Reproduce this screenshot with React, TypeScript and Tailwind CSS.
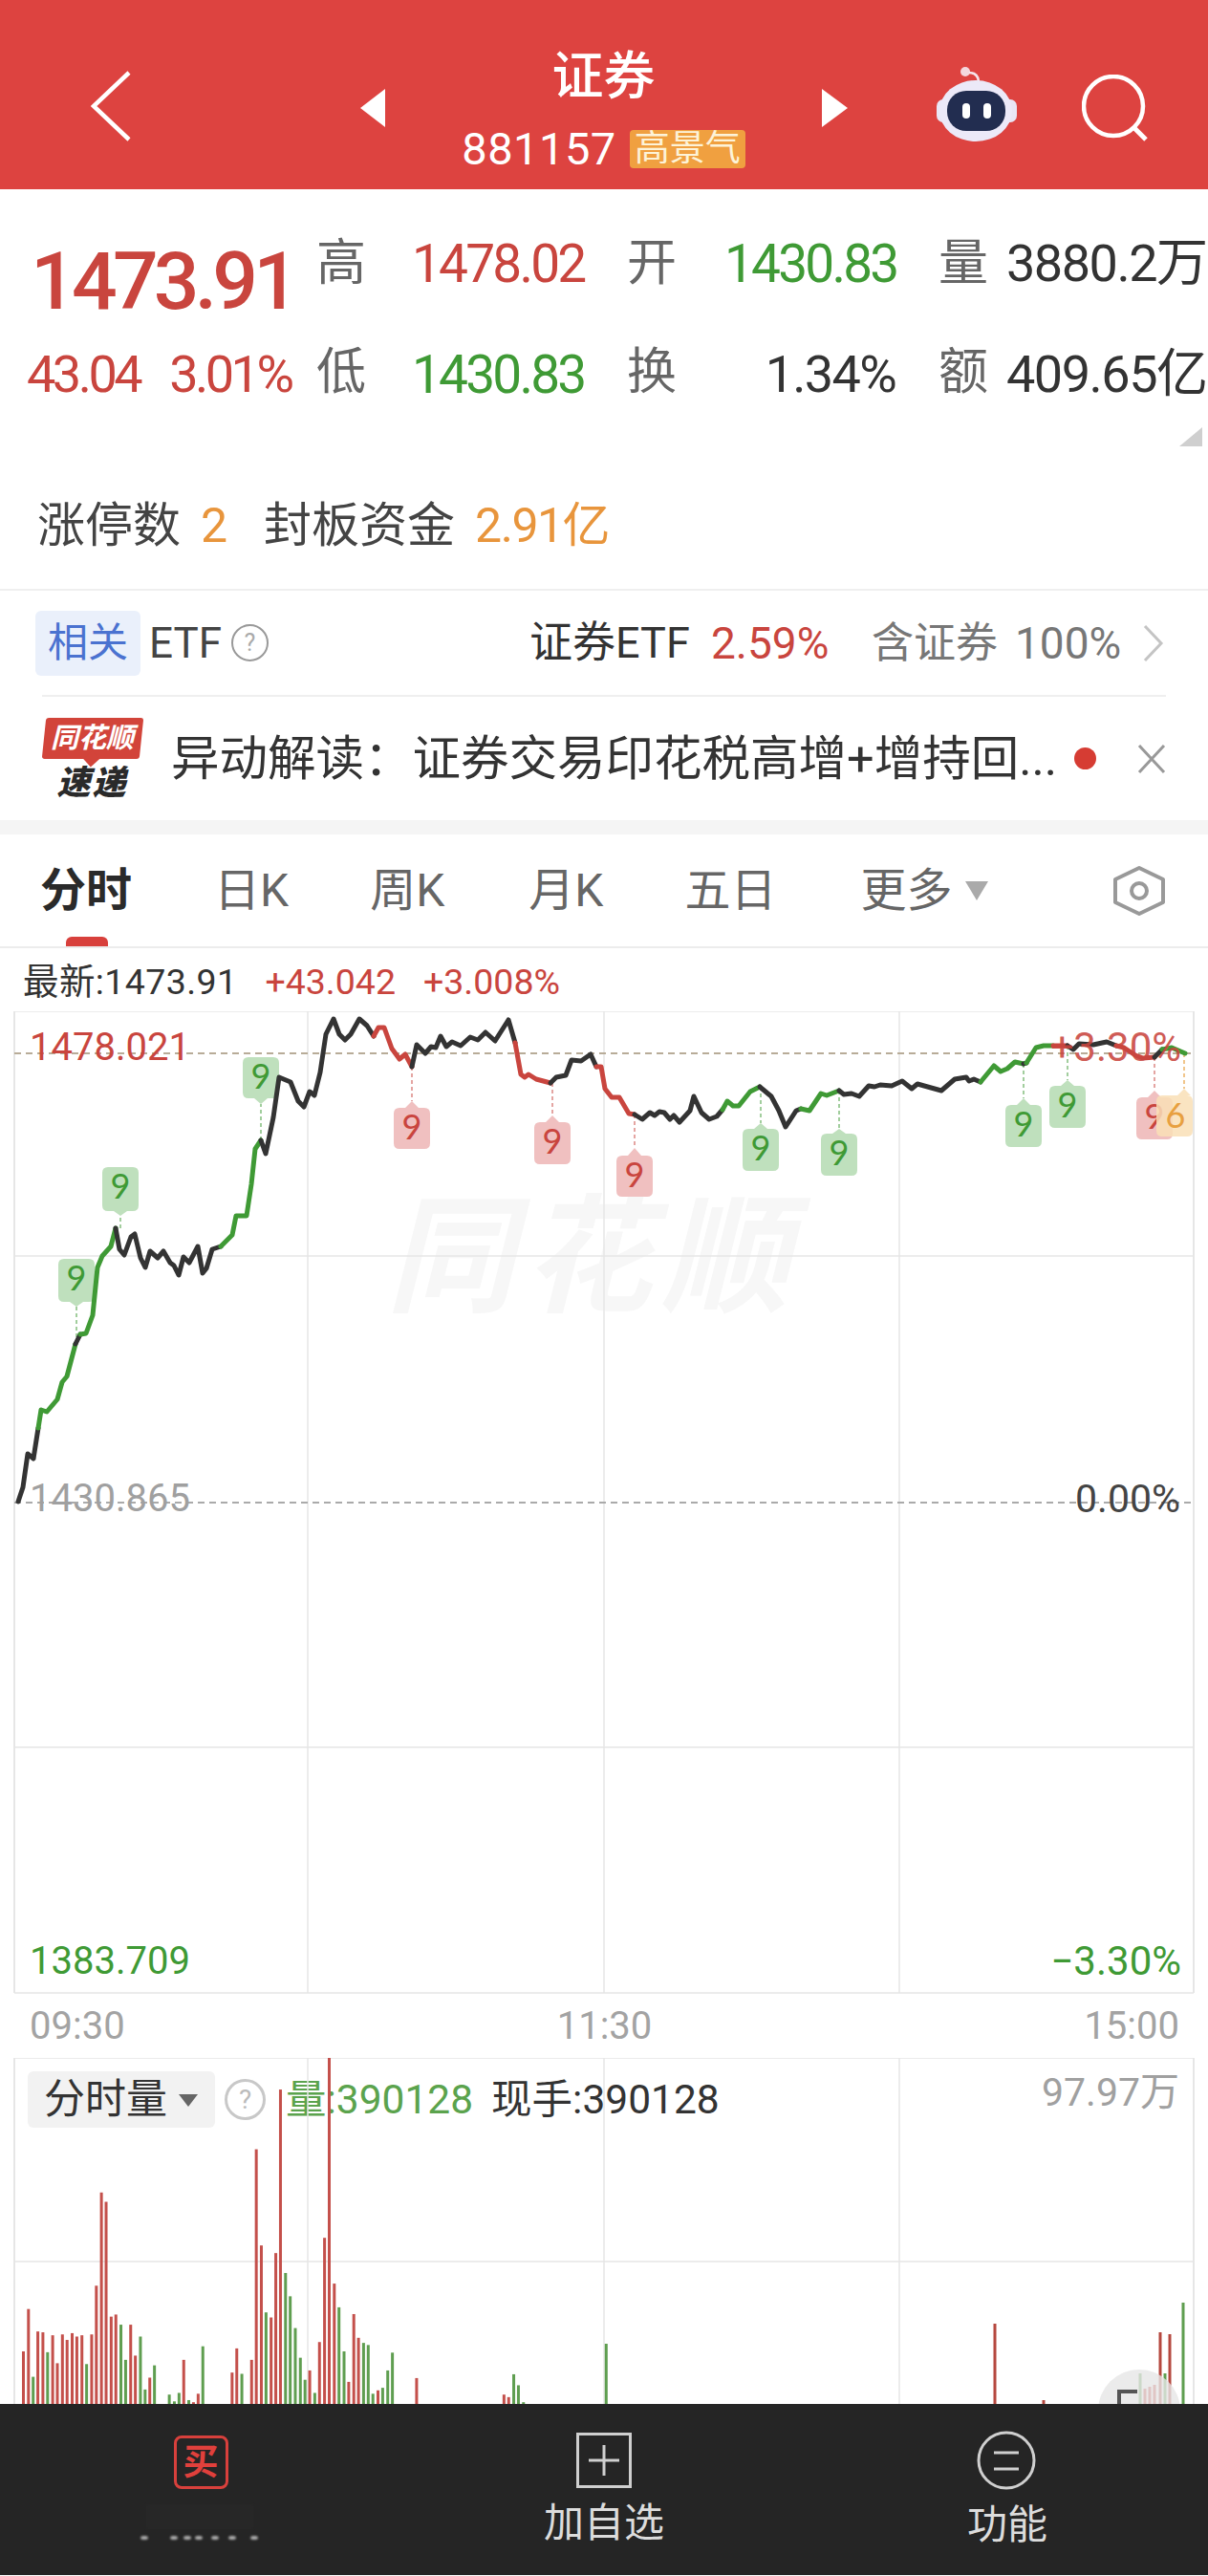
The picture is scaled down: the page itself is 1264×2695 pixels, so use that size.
type Seg = { color: string; pts: number[][] };

const GREEN = "#3f9a35";
const RED = "#c9453e";
const BLACK = "#333333";

const segments: Seg[] = [
  { color: BLACK, pts: [[19, 1572], [24, 1557], [29, 1522], [35, 1527], [40, 1495]] },
  { color: GREEN, pts: [[40, 1495], [43, 1476], [49, 1478], [60, 1465], [65, 1447], [70, 1441], [79, 1407]] },
  { color: BLACK, pts: [[79, 1407], [84, 1397]] },
  { color: GREEN, pts: [[84, 1397], [90, 1396], [97, 1377], [102, 1327], [107, 1315], [116, 1305], [121, 1286]] },
  {
    color: BLACK,
    pts: [[121, 1286], [125, 1308], [130, 1314], [137, 1295], [141, 1292], [147, 1317], [152, 1327], [157, 1310], [165, 1317], [171, 1310], [178, 1322], [182, 1325], [187, 1335], [192, 1316], [198, 1322], [207, 1305], [212, 1333], [216, 1328], [222, 1308], [231, 1305]],
  },
  { color: GREEN, pts: [[231, 1305], [243, 1293], [247, 1273], [258, 1273], [263, 1240], [267, 1203], [273, 1194]] },
  {
    color: BLACK,
    pts: [[273, 1194], [278, 1208], [286, 1170], [292, 1128], [304, 1133], [312, 1153], [318, 1159], [324, 1143], [329, 1147], [335, 1123], [341, 1083], [349, 1067], [355, 1083], [361, 1089], [367, 1083], [376, 1067], [384, 1074], [391, 1085]],
  },
  { color: RED, pts: [[391, 1085], [396, 1076], [402, 1076], [410, 1098], [418, 1109], [424, 1104], [431, 1117]] },
  {
    color: BLACK,
    pts: [[431, 1117], [436, 1094], [445, 1103], [451, 1096], [456, 1097], [461, 1085], [467, 1096], [473, 1091], [482, 1095], [492, 1086], [500, 1089], [508, 1081], [518, 1090], [532, 1068], [539, 1092]],
  },
  { color: RED, pts: [[539, 1092], [545, 1125], [549, 1128], [553, 1125], [561, 1130], [576, 1134]] },
  { color: BLACK, pts: [[576, 1134], [582, 1128], [592, 1126], [598, 1110], [608, 1111], [618, 1104], [624, 1117]] },
  { color: RED, pts: [[624, 1117], [629, 1117], [633, 1140], [640, 1149], [648, 1149], [658, 1166], [664, 1167]] },
  {
    color: BLACK,
    pts: [[664, 1167], [672, 1172], [680, 1165], [685, 1168], [690, 1164], [695, 1165], [701, 1172], [705, 1168], [711, 1175], [722, 1163], [726, 1148], [734, 1165], [742, 1172], [750, 1169], [756, 1162]],
  },
  { color: GREEN, pts: [[756, 1162], [761, 1153], [767, 1158], [773, 1158], [785, 1143], [795, 1138]] },
  { color: BLACK, pts: [[795, 1138], [807, 1148], [815, 1163], [822, 1180], [833, 1163], [838, 1161]] },
  { color: GREEN, pts: [[838, 1161], [847, 1163], [859, 1145], [865, 1147], [878, 1142]] },
  {
    color: BLACK,
    pts: [[878, 1142], [883, 1146], [891, 1145], [899, 1148], [909, 1137], [915, 1138], [921, 1136], [933, 1137], [944, 1132], [954, 1140], [960, 1135], [967, 1137], [985, 1142], [999, 1130], [1011, 1128], [1014, 1132], [1019, 1130], [1026, 1133]],
  },
  { color: GREEN, pts: [[1026, 1133], [1040, 1116], [1047, 1122], [1054, 1119], [1062, 1112], [1071, 1114]] },
  { color: BLACK, pts: [[1071, 1114], [1074, 1113]] },
  { color: GREEN, pts: [[1074, 1113], [1084, 1097], [1092, 1095], [1102, 1095]] },
  { color: RED, pts: [[1102, 1095], [1117, 1095]] },
  { color: BLACK, pts: [[1117, 1095], [1123, 1099], [1129, 1093], [1144, 1094], [1158, 1091], [1168, 1095]] },
  { color: RED, pts: [[1168, 1095], [1176, 1097], [1188, 1105], [1196, 1108], [1208, 1107]] },
  { color: BLACK, pts: [[1208, 1107], [1216, 1099]] },
  { color: GREEN, pts: [[1216, 1099], [1226, 1097], [1240, 1103]] },
];

// x, point on the line, tip of the tag, body top, body bottom
const tags = [
  { x: 80, from: 1400, tip: 1368, top: 1318, bottom: 1363, kind: "g" },
  { x: 126, from: 1286, tip: 1273, top: 1222, bottom: 1268, kind: "g" },
  { x: 273, from: 1194, tip: 1156, top: 1107, bottom: 1150, kind: "g" },
  { x: 431, from: 1117, tip: 1153, top: 1160, bottom: 1203, kind: "r" },
  { x: 578, from: 1134, tip: 1168, top: 1175, bottom: 1219, kind: "r" },
  { x: 664, from: 1167, tip: 1202, top: 1210, bottom: 1253, kind: "r" },
  { x: 796, from: 1138, tip: 1176, top: 1182, bottom: 1226, kind: "g" },
  { x: 878, from: 1142, tip: 1182, top: 1187, bottom: 1231, kind: "g" },
  { x: 1071, from: 1114, tip: 1150, top: 1157, bottom: 1201, kind: "g" },
  { x: 1117, from: 1095, tip: 1131, top: 1137, bottom: 1181, kind: "g" },
  { x: 1208, from: 1107, tip: 1142, top: 1149, bottom: 1193, kind: "r" },
];

const tagColors: Record<string, { bg: string; fg: string }> = {
  g: { bg: "#bfe0bd", fg: "#3f9a35" },
  r: { bg: "#f0c0c0", fg: "#c9453e" },
};

// bars measured off the crop: x / 2.45, top = 2000 + y / 2.256
const bars: [number, number, string][] = [
  [60, 1040, "r"], [73, 940, "r"], [85, 1100, "g"], [97, 993, "r"], [110, 995, "r"], [122, 1042, "g"], [135, 1002, "r"], [147, 1068, "r"],
  [160, 1000, "r"], [172, 1013, "r"], [185, 997, "r"], [197, 1005, "r"], [210, 1002, "r"], [222, 1070, "g"], [235, 1000, "r"], [247, 885, "r"],
  [260, 665, "r"], [272, 687, "r"], [285, 958, "r"], [297, 953, "r"], [310, 977, "g"], [322, 1060, "g"], [335, 977, "r"], [347, 1050, "r"],
  [360, 1005, "g"], [372, 1130, "g"], [384, 1102, "r"], [396, 1073, "g"], [434, 1142, "g"], [447, 1158, "g"], [459, 1138, "g"], [471, 1060, "r"],
  [484, 1155, "g"], [496, 1160, "r"], [508, 1140, "r"], [520, 1028, "g"], [595, 1090, "r"], [607, 1033, "r"], [620, 1093, "g"], [645, 1060, "r"],
  [657, 563, "r"], [670, 790, "r"], [682, 948, "g"], [695, 960, "r"], [707, 808, "r"], [719, 422, "r"], [732, 855, "g"], [744, 910, "g"],
  [757, 985, "g"], [770, 1055, "g"], [782, 1107, "g"], [794, 1085, "r"], [807, 1138, "g"], [819, 1018, "r"], [832, 772, "r"], [844, 345, "r"],
  [857, 880, "r"], [869, 936, "g"], [882, 1040, "g"], [894, 1112, "r"], [907, 952, "r"], [919, 1008, "r"], [932, 1020, "g"], [944, 1025, "g"],
  [956, 1140, "g"], [969, 1132, "r"], [981, 1126, "g"], [994, 1085, "g"], [1006, 1043, "g"], [1068, 1103, "r"], [1292, 1142, "r"], [1304, 1148, "r"],
  [1317, 1094, "g"], [1329, 1120, "g"], [1342, 1160, "g"], [1554, 1022, "g"],
];

const rightBars: [number, number, string][] = [
  [1041, 2432, "#b5483f"], [1092, 2512, "#b5483f"], [1193, 2484, "#5f9e50"], [1198, 2500, "#c9453e"], [1203, 2498, "#c9453e"], [1208, 2496, "#c9453e"],
  [1214, 2441, "#b5483f"], [1219, 2484, "#5f9e50"], [1224, 2443, "#b5483f"], [1238, 2410, "#5f9e50"],
];

const tabs = [
  { label: "日K", cls: "ml-[86px]" },
  { label: "周K", cls: "ml-[85px]" },
  { label: "月K", cls: "ml-[88px]" },
  { label: "五日", cls: "ml-[85px]" },
];

function Tag({ x, from, tip, top, bottom, kind }: { x: number; from: number; tip: number; top: number; bottom: number; kind: string }) {
  const c = tagColors[kind];
  const w = 19;
  const up = tip > bottom;
  const body = `M${x - w + 6} ${top}H${x + w - 6}Q${x + w} ${top} ${x + w} ${top + 6}V${bottom - 6}Q${x + w} ${bottom} ${x + w - 6} ${bottom}H${x - w + 6}Q${x - w} ${bottom} ${x - w} ${bottom - 6}V${top + 6}Q${x - w} ${top} ${x - w + 6} ${top}Z`;
  const point = up ? `M${x - 7} ${bottom}L${x} ${tip}L${x + 7} ${bottom}Z` : `M${x - 7} ${top}L${x} ${tip}L${x + 7} ${top}Z`;
  return (
    <g>
      <line x1={x} y1={from} x2={x} y2={tip} stroke={c.fg} strokeWidth={1.2} strokeDasharray="4 3" opacity={0.8} />
      <path d={body + point} fill={c.bg} />
      <text x={x} y={top + 33} textAnchor="middle" fontSize={36} fontFamily="Lato" fill={c.fg}>
        9
      </text>
    </g>
  );
}

function IntradayChart() {
  return (
    <div className="relative h-[1028px]">
      <div className="absolute left-[404px] top-[196px] text-[134px] leading-[125px] font-bold italic tracking-[10px] text-[#f7f7f7]">同花顺</div>
      <svg className="absolute inset-0 h-full w-full" viewBox="0 1059 1264 1028">
        <g stroke="#e6e6e6" strokeWidth={1.5}>
          <line x1={15} y1={1059} x2={1249} y2={1059} />
          <line x1={15} y1={1315} x2={1249} y2={1315} />
          <line x1={15} y1={1829} x2={1249} y2={1829} />
          <line x1={15} y1={2086} x2={1249} y2={2086} />
          <line x1={15} y1={1059} x2={15} y2={2086} strokeWidth={2} />
          <line x1={322} y1={1059} x2={322} y2={2086} />
          <line x1={632} y1={1059} x2={632} y2={2086} />
          <line x1={941} y1={1059} x2={941} y2={2086} />
          <line x1={1249} y1={1059} x2={1249} y2={2086} strokeWidth={2} />
        </g>
        <line x1={15} y1={1103} x2={1249} y2={1103} stroke="#b8ac98" strokeWidth={2} strokeDasharray="7 5" />
        <line x1={15} y1={1573} x2={1249} y2={1573} stroke="#aaaaaa" strokeWidth={2} strokeDasharray="7 5" />
        {tags.map((t) => (
          <Tag key={t.x} {...t} />
        ))}
        <line x1={1239} y1={1103} x2={1239} y2={1140} stroke="#e8a040" strokeWidth={1.2} strokeDasharray="4 3" />
        <g opacity={0.85}>
          <path d="M1216 1147H1242Q1248 1147 1248 1153V1184Q1248 1190 1242 1190H1216Q1210 1190 1210 1184V1153Q1210 1147 1216 1147ZM1232 1147L1239 1140L1246 1147Z" fill="#f9dfb6" />
        </g>
        <text x={1230} y={1181} textAnchor="middle" fontSize={36} fontFamily="Lato" fill="#e8a040">
          6
        </text>
        {segments.map((s, i) => (
          <polyline key={i} points={s.pts.map((p) => p.join(",")).join(" ")} fill="none" stroke={s.color} strokeWidth={5} strokeLinejoin="round" strokeLinecap="round" />
        ))}
      </svg>
      <span className="absolute left-[31px] top-[18px] text-[40px] leading-[40px] text-[#c9453e]">1478.021</span>
      <span className="absolute right-[28px] top-[18px] text-[42px] leading-[40px] text-[#c9453e]/90">+3.30%</span>
      <span className="absolute left-[31px] top-[490px] text-[40px] leading-[40px] text-[#a0a0a0]">1430.865</span>
      <span className="absolute right-[29px] top-[490px] text-[41px] leading-[40px] text-[#444]">0.00%</span>
      <span className="absolute left-[31px] top-[974px] text-[40px] leading-[40px] text-[#3f9a35]">1383.709</span>
      <span className="absolute right-[28px] top-[974px] text-[42px] leading-[40px] text-[#3f9a35]">−3.30%</span>
    </div>
  );
}

function VolumeChart() {
  return (
    <div className="relative h-[362px] overflow-hidden">
      <div className="absolute left-[29px] top-[14px] flex items-center">
        <div className="flex h-[59px] w-[196px] items-center rounded-md bg-[#f2f2f2] pl-[17px] text-[43px] leading-[59px] text-[#333]">
          分时量
          <span className="ml-[12px] mt-[2px] h-0 w-0 border-x-[10px] border-t-[13px] border-x-transparent border-t-[#666]" />
        </div>
        <span className="ml-[10px] flex h-[43px] w-[43px] items-center justify-center rounded-full border-[3px] border-[#c8c8c8] text-[28px] leading-none text-[#bbb]">?</span>
        <span className="ml-[21px] text-[42.5px] leading-[59px] text-[#5ba34d]">量:390128</span>
        <span className="ml-[19px] text-[42.5px] leading-[59px] text-[#333]">现手:390128</span>
      </div>
      <span className="absolute right-[30px] top-[16px] text-[41px] leading-[40px] text-[#a0a0a0]">97.97万</span>
      <svg className="absolute inset-0 h-full w-full" viewBox="0 2154 1264 362">
        <g stroke="#e6e6e6" strokeWidth={1.5}>
          <line x1={15} y1={2154} x2={1249} y2={2154} />
          <line x1={15} y1={2367} x2={1249} y2={2367} />
          <line x1={15} y1={2154} x2={15} y2={2516} strokeWidth={2} />
          <line x1={322} y1={2154} x2={322} y2={2516} />
          <line x1={632} y1={2154} x2={632} y2={2516} />
          <line x1={941} y1={2154} x2={941} y2={2516} />
          <line x1={1249} y1={2154} x2={1249} y2={2516} strokeWidth={2} />
        </g>
        {bars.map(([x, y, kind]) => (
          <rect key={x} x={x / 2.45 - 1.5} y={2000 + y / 2.256} width={3} height={2516 - (2000 + y / 2.256)} fill={kind === "r" ? "#c4504b" : "#5f9e50"} />
        ))}
        {rightBars.map(([x, y, color]) => (
          <rect key={x} x={x - 1.5} y={y} width={3} height={2516 - y} fill={color} />
        ))}
        <circle cx={1192} cy={2523} r={43} fill="#e6e6e6" opacity={0.8} />
        <path d="M1171 2516V2503H1190" fill="none" stroke="#555" strokeWidth={4} />
      </svg>
    </div>
  );
}

function RobotIcon() {
  return (
    <svg width="90" height="84" viewBox="0 0 90 84">
      <circle cx="33" cy="7" r="5" fill="#f4d6dc" />
      <path d="M37 8Q46 8 47 17" fill="none" stroke="#f6e4ea" strokeWidth="2.5" />
      <rect x="3" y="36" width="84" height="24" rx="7" fill="#e9e6f5" />
      <ellipse cx="44" cy="48" rx="38" ry="32" fill="#ece9f8" />
      <rect x="14" y="27" width="61" height="42" rx="20" fill="#222d50" />
      <rect x="30" y="40" width="8" height="16" rx="4" fill="#fff" />
      <rect x="52" y="40" width="8" height="16" rx="4" fill="#fff" />
    </svg>
  );
}

function Logo() {
  return (
    <div className="flex w-[105px] shrink-0 flex-col items-center">
      <div className="relative flex h-[43px] w-[102px] -skew-x-6 items-center justify-center rounded-[3px] bg-[#d2443a]">
        <span className="skew-x-6 text-[29px] leading-none font-bold italic text-white">同花顺</span>
        <span className="absolute -bottom-[6px] left-[46px] h-[12px] w-[12px] rotate-45 bg-[#d2443a]" />
      </div>
      <div className="mt-[8px] text-[35px] leading-[35px] font-black italic tracking-[2px] text-[#2a2a2a]">速递</div>
    </div>
  );
}

export default function App() {
  return (
    <div className="flex h-[2695px] w-[1264px] flex-col overflow-hidden bg-white [font-family:Roboto,'Noto_Sans_CJK_SC',sans-serif]">
      {/* top bar */}
      <header className="flex h-[198px] shrink-0 items-center bg-[#dd4340] pl-[95px] text-white">
        <svg width="42" height="74" viewBox="0 0 42 74" className="mt-[24px]">
          <path d="M40 2L3 37L40 72" fill="none" stroke="#fff" strokeWidth="4.5" />
        </svg>
        <span className="ml-[240px] mt-[28px] h-0 w-0 border-y-[20px] border-r-[26px] border-y-transparent border-r-white" />
        <div className="flex h-full w-[457px] flex-col items-center pt-[50px]">
          <div className="text-[54px] leading-[62px] font-medium">证券</div>
          <div className="mt-[24px] flex h-[40px] items-center">
            <span className="text-[47px] leading-[40px] tracking-[0.5px]">881157</span>
            <span className="ml-[14px] flex h-[40px] w-[121px] items-center justify-center rounded-[4px] bg-[#f0a040] text-[37px] leading-[40px] text-[#fdf3d8]">高景气</span>
          </div>
        </div>
        <span className="mt-[28px] h-0 w-0 border-y-[20px] border-l-[27px] border-y-transparent border-l-white" />
        <div className="ml-[90px] mt-[22px]">
          <RobotIcon />
        </div>
        <svg width="70" height="70" viewBox="0 0 70 70" className="ml-[65px] mt-[28px]">
          <circle cx="33" cy="33" r="31" fill="none" stroke="#fff" strokeWidth="4.5" />
          <path d="M54 55L67 68" fill="none" stroke="#fff" strokeWidth="5" />
        </svg>
      </header>

      {/* quote block */}
      <section className="relative flex h-[418px] shrink-0 flex-col pl-[30px] pt-[50px]">
        <div className="grid grid-cols-[301px_100px_225px_102px_224px_71px_211px] grid-rows-[56px_56px] items-center gap-y-[60px] text-[#666] [&>*]:leading-[56px]">
          <div className="ml-[2px] mt-[38px] text-[84px] font-medium tracking-[-4.8px] text-[#c9453e]">1473.91</div>
          <div className="text-[52px]">高</div>
          <div className="text-[55px] tracking-[-2.8px] text-[#c9453e]">1478.02</div>
          <div className="text-[52px]">开</div>
          <div className="text-[55px] tracking-[-2.8px] text-[#3f9a35]">1430.83</div>
          <div className="text-[52px]">量</div>
          <div className="whitespace-nowrap text-[54px] tracking-[-1.5px] text-[#333]">3880.2万</div>

          <div className="-ml-[2px] flex gap-[31px] text-[#c9453e]">
            <span className="text-[54px] tracking-[-3.5px]">43.04</span>
            <span className="text-[54px] tracking-[-3.5px]">3.01%</span>
          </div>
          <div className="mb-[4px] text-[52px]">低</div>
          <div className="text-[55px] tracking-[-2.8px] text-[#3f9a35]">1430.83</div>
          <div className="mb-[4px] text-[52px]">换</div>
          <div className="pr-[45px] text-right text-[54px] tracking-[-1.7px] text-[#333]">1.34%</div>
          <div className="mb-[4px] text-[52px]">额</div>
          <div className="whitespace-nowrap text-[54px] tracking-[-1.5px] text-[#333]">409.65亿</div>
        </div>
        <div className="ml-[9px] mt-[102px] flex h-[56px] items-center text-[50px] leading-[56px] text-[#444]">
          涨停数
          <span className="ml-[21px] text-[#e8953c]">2</span>
          <span className="ml-[38px]">封板资金</span>
          <span className="ml-[21px] tracking-[-1.5px] text-[#e8953c]">2.91亿</span>
        </div>
        <span className="absolute right-[6px] top-[249px] h-0 w-0 border-b-[20px] border-l-[24px] border-b-[#cfcfcf] border-l-transparent" />
      </section>

      {/* ETF row */}
      <section className="flex h-[111px] shrink-0 items-center border-t-2 border-[#efefef] pl-[37px]">
        <span className="flex h-[68px] w-[110px] items-center justify-center rounded-md bg-[#eaf0fb] text-[42px] leading-[68px] text-[#4a72d0]">相关</span>
        <span className="ml-[9px] text-[44px] leading-[68px] text-[#444]">ETF</span>
        <span className="ml-[10px] flex h-[39px] w-[39px] items-center justify-center rounded-full border-2 border-[#999] text-[25px] leading-none text-[#aaa]">?</span>
        <span className="ml-[273px] w-[190px] text-[45px] leading-[68px] text-[#333]">证券ETF</span>
        <span className="w-[168px] text-[46px] leading-[68px] text-[#c9453e]">2.59%</span>
        <span className="w-[150px] text-[44px] leading-[68px] text-[#777]">含证券</span>
        <span className="w-[134px] text-[46px] leading-[68px] text-[#777]">100%</span>
        <svg width="22" height="40" viewBox="0 0 22 40">
          <path d="M2 2L19 20L2 38" fill="none" stroke="#c4c4c4" strokeWidth="3" />
        </svg>
      </section>

      {/* news row */}
      <section className="flex h-[131px] shrink-0 flex-col px-[44px]">
        <div className="border-t-2 border-[#efefef]" />
        <div className="flex flex-1 items-center">
          <Logo />
          <span className="ml-[30px] w-[930px] shrink-0 whitespace-nowrap text-[50.5px] leading-[60px] text-[#333]">异动解读：证券交易印花税高增+增持回...</span>
          <span className="ml-[15px] h-[23px] w-[23px] shrink-0 rounded-full bg-[#d63c33]" />
          <svg width="30" height="32" viewBox="0 0 30 32" className="ml-[43px] shrink-0">
            <path d="M2 2L28 30M28 2L2 30" fill="none" stroke="#999" strokeWidth="3" />
          </svg>
        </div>
      </section>
      <div className="h-[15px] shrink-0 bg-[#f5f5f5]" />

      {/* period tabs */}
      <nav className="flex h-[119px] shrink-0 items-center border-b-2 border-[#ececec] pl-[42px] text-[48px] leading-[56px] text-[#666]">
        <div className="relative font-bold text-[#2a2a2a]">
          分时
          <span className="absolute bottom-[-30px] left-[27px] h-[10px] w-[44px] rounded-t-[6px] bg-[#d8403c]" />
        </div>
        {tabs.map((t) => (
          <span key={t.label} className={t.cls}>
            {t.label}
          </span>
        ))}
        <span className="ml-[88px]">更多</span>
        <span className="ml-[14px] h-0 w-0 border-x-[12px] border-t-[20px] border-x-transparent border-t-[#aaa]" />
        <svg width="56" height="54" viewBox="0 0 56 54" className="ml-[130px]">
          <path d="M28 3L53 15V39L28 51L3 39V15Z" fill="none" stroke="#999" strokeWidth="4" strokeLinejoin="round" />
          <circle cx="28" cy="27" r="8" fill="none" stroke="#999" strokeWidth="4" />
        </svg>
      </nav>

      {/* latest values */}
      <div className="flex h-[66px] shrink-0 items-center pl-[24px] pt-[3px] text-[37.5px] leading-[44px]">
        <span className="tracking-[0.4px] text-[#333]">最新:1473.91</span>
        <span className="ml-[29px] text-[#c9453e]">+43.042</span>
        <span className="ml-[29px] text-[#c9453e]">+3.008%</span>
      </div>

      <IntradayChart />

      {/* time axis */}
      <div className="flex h-[67px] shrink-0 items-center justify-between pl-[31px] pr-[30px] text-[40px] leading-[44px] text-[#a3a3a3]">
        <span>09:30</span>
        <span>11:30</span>
        <span>15:00</span>
      </div>

      <VolumeChart />

      {/* bottom bar */}
      <footer className="grid h-[179px] shrink-0 grid-cols-[420px_424px_420px] bg-[#252525]">
        <div className="flex flex-col items-center pt-[33px]">
          <span className="flex h-[56px] w-[57px] items-center justify-center rounded-[8px] border-[3px] border-[#d8403c] text-[37px] leading-none font-bold text-[#e0403c]">买</span>
          <svg width="130" height="46" viewBox="0 0 130 46" className="mt-[10px] blur-[1px]">
            <rect x="8" y="6" width="112" height="26" fill="#333" opacity="0.2" />
            {[6, 37, 51, 63, 80, 98, 121].map((x) => (
              <ellipse key={x} cx={x} cy={41} rx={4} ry={2} fill="#cfcfcf" opacity={0.8} />
            ))}
          </svg>
        </div>
        <div className="flex flex-col items-center pt-[30px]">
          <svg width="58" height="58" viewBox="0 0 58 58">
            <rect x="1.5" y="1.5" width="55" height="55" fill="none" stroke="#cfcfcf" strokeWidth="3" />
            <path d="M29 13V45M13 29H45" stroke="#cfcfcf" strokeWidth="3" />
          </svg>
          <span className="mt-[14px] text-[42px] leading-[46px] text-[#dcdcdc]">加自选</span>
        </div>
        <div className="flex flex-col items-center pt-[28px]">
          <svg width="62" height="62" viewBox="0 0 62 62" className="-ml-[2px]">
            <circle cx="31" cy="31" r="29" fill="none" stroke="#cfcfcf" strokeWidth="3" />
            <path d="M18 23H44M18 40H44" stroke="#cfcfcf" strokeWidth="3" />
          </svg>
          <span className="mt-[14px] text-[42px] leading-[46px] text-[#dcdcdc]">功能</span>
        </div>
      </footer>
    </div>
  );
}
